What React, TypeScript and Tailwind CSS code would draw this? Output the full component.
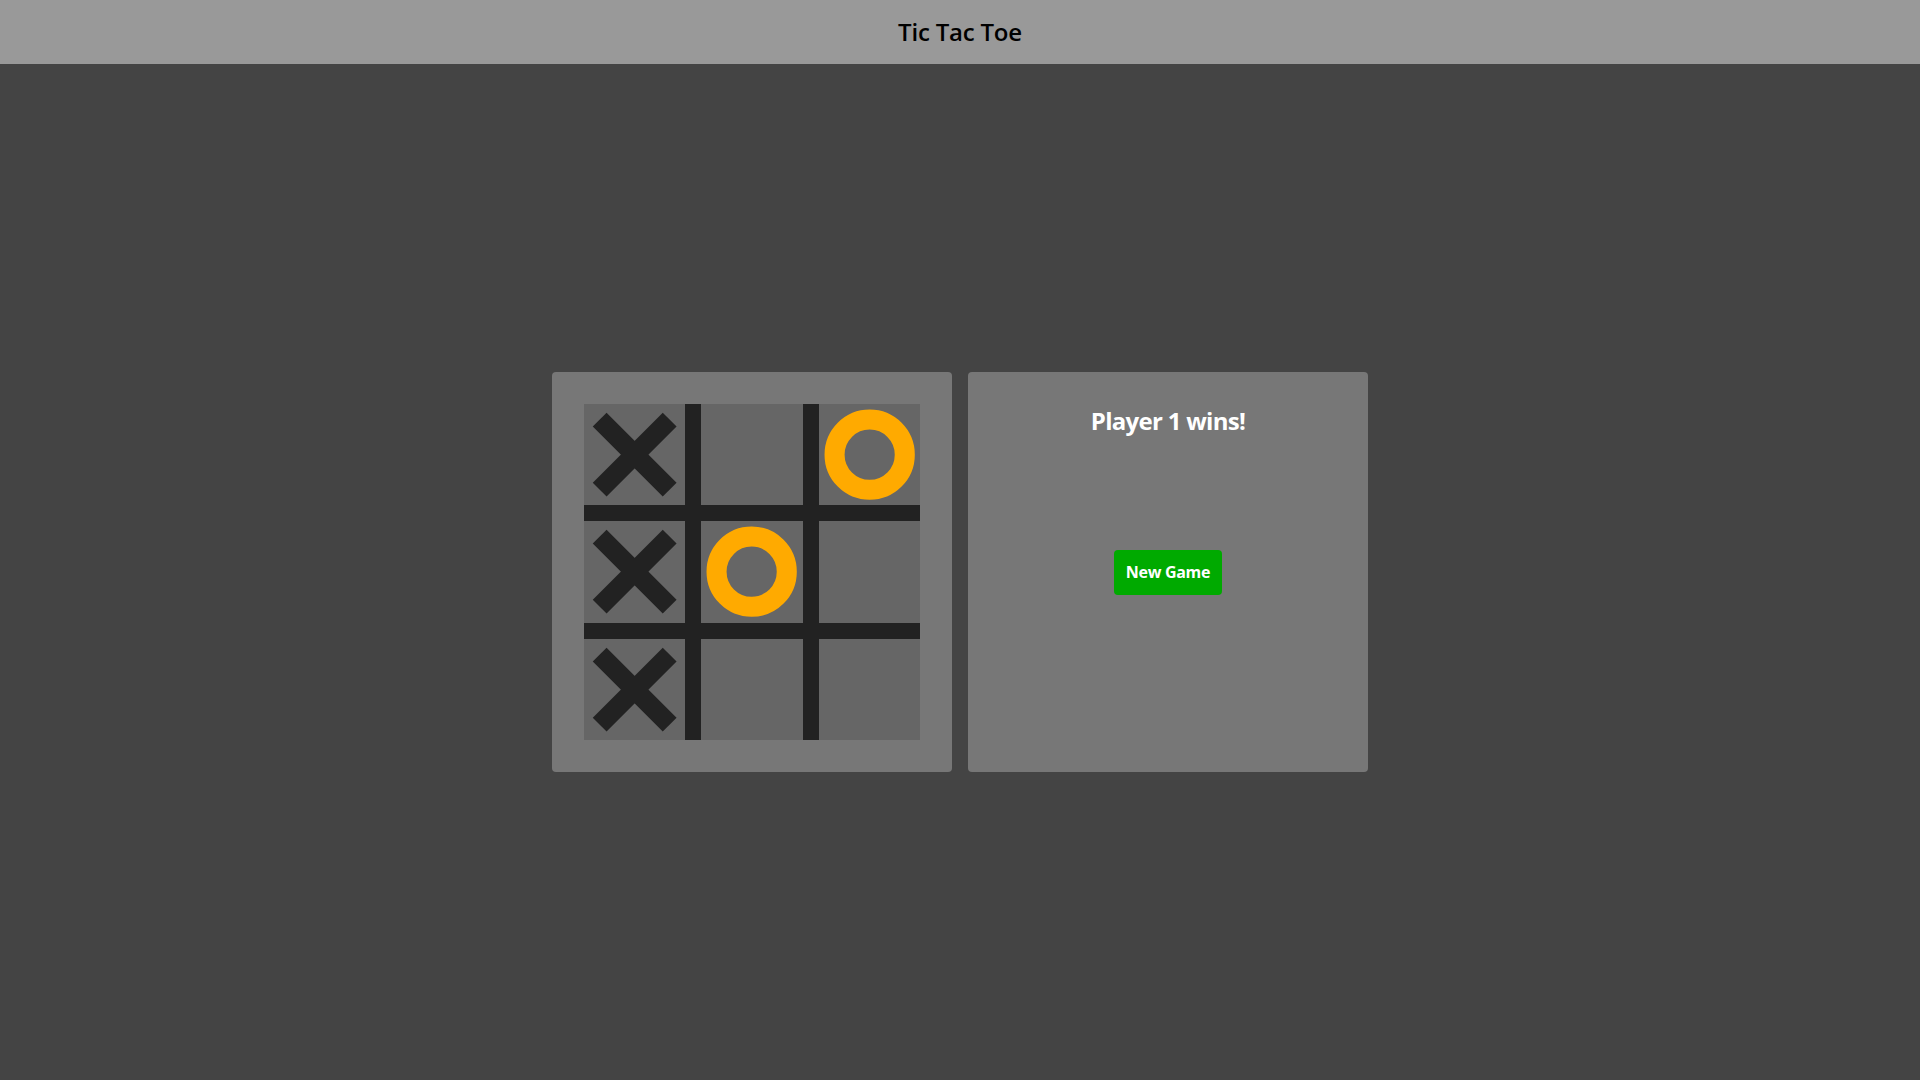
import React from "react";

type Mark = "X" | "O" | null;

const board: Mark[] = ["X", null, "O", "X", "O", null, "X", null, null];

const XMark: React.FC = () => (
  <svg viewBox="0 0 101 101" className="w-full h-full">
    <line x1="15.6" y1="15.6" x2="85.4" y2="85.4" stroke="#222222" strokeWidth="19.5" />
    <line x1="85.4" y1="15.6" x2="15.6" y2="85.4" stroke="#222222" strokeWidth="19.5" />
  </svg>
);

const OMark: React.FC = () => (
  <svg viewBox="0 0 101 101" className="w-full h-full">
    <circle cx="50.5" cy="50.5" r="35" fill="none" stroke="#ffaa00" strokeWidth="20" />
  </svg>
);

const App: React.FC = () => {
  return (
    <div
      className="w-full h-screen flex flex-col bg-[#444444]"
      style={{ fontFamily: '"Open Sans", "Noto Sans", sans-serif' }}
    >
      {/* Header */}
      <header className="h-16 shrink-0 flex items-center justify-center bg-[#999999]">
        <h1 className="text-2xl font-semibold tracking-[-0.2px] text-black">Tic Tac Toe</h1>
      </header>

      {/* Game area */}
      <main className="flex-1 flex items-center justify-center gap-4">
        {/* Board */}
        <div className="w-[400px] h-[400px] rounded bg-[#777777] flex items-center justify-center">
          <div className="w-[336px] h-[336px] grid grid-cols-3 grid-rows-3 gap-4 bg-[#222222]">
            {board.map((m, i) => (
              <div key={i} className="bg-[#666666]">
                {m === "X" && <XMark />}
                {m === "O" && <OMark />}
              </div>
            ))}
          </div>
        </div>

        {/* Status */}
        <div className="w-[400px] h-[400px] rounded bg-[#777777] relative flex flex-col items-center">
          <h2 className="pt-[33px] text-[24px] leading-[32px] tracking-[-0.7px] font-bold text-white">
            Player 1 wins!
          </h2>
          <div className="absolute inset-0 flex items-center justify-center">
            <button className="h-[45px] px-3 rounded bg-[#00aa00] text-white font-bold text-base tracking-[-0.3px]">
              New Game
            </button>
          </div>
        </div>
      </main>
    </div>
  );
};

export default App;
